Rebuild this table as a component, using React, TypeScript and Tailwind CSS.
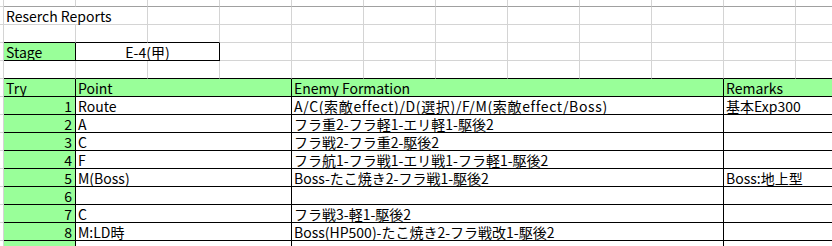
import type { ReactNode } from "react";

type Edge = "grid" | "ink" | "head";

const spanCls: Record<number, string> = {
  1: "col-span-1",
  2: "col-span-2",
  3: "col-span-3",
  6: "col-span-6",
};

const rightCls: Record<Edge, string> = {
  grid: "border-r-[#d4d4d4]",
  ink: "border-r-black",
  head: "border-r-[#d4d4d4]",
};

const bottomCls: Record<Edge, string> = {
  grid: "border-b-[#d4d4d4]",
  ink: "border-b-black",
  head: "border-b-[#a0a0a0]",
};

type CellProps = {
  span?: number;
  green?: boolean;
  r?: Edge;
  b?: Edge;
  align?: "left" | "right" | "center";
  short?: boolean;
  wide?: boolean;
  children?: ReactNode;
};

function Cell({ span = 1, green, r = "grid", b = "grid", align = "left", short, wide, children }: CellProps) {
  const justify =
    align === "right" ? "justify-end pr-[3px]" : align === "center" ? "justify-center" : "justify-start pl-[2px]";
  return (
    <div
      className={`${spanCls[span]} ${short ? "h-[7px]" : "h-[18px]"} border-r border-b ${rightCls[r]} ${bottomCls[b]} ${
        green ? "bg-[#99ff99]" : "bg-white"
      } ${wide ? "tracking-[0.65px]" : ""} flex items-end ${justify} whitespace-nowrap leading-[16px]`}
    >
      {children}
    </div>
  );
}

// left gutter, one per sheet row
const Gutter = ({ short }: { short?: boolean }) => (
  <div className={`${short ? "h-[7px]" : "h-[18px]"} border-r border-b border-r-[#d4d4d4] border-b-[#d4d4d4] bg-white`} />
);

const blanks = (n: number, b: Edge = "grid") =>
  Array.from({ length: n }, (_, i) => <Cell key={`x${i}`} b={b} />);

const tries = [
  { n: "1", point: "Route", enemy: "A/C(索敵effect)/D(選択)/F/M(索敵effect/Boss)", note: "基本Exp300", wide: true },
  { n: "2", point: "A", enemy: "フラ重2-フラ軽1-エリ軽1-駆後2", note: "" },
  { n: "3", point: "C", enemy: "フラ戦2-フラ重2-駆後2", note: "" },
  { n: "4", point: "F", enemy: "フラ航1-フラ戦1-エリ戦1-フラ軽1-駆後2", note: "" },
  { n: "5", point: "M(Boss)", enemy: "Boss-たこ焼き2-フラ戦1-駆後2", note: "Boss:地上型" },
  { n: "6", point: "", enemy: "", note: "" },
  { n: "7", point: "C", enemy: "フラ戦3-軽1-駆後2", note: "" },
  { n: "8", point: "M:LD時", enemy: "Boss(HP500)-たこ焼き2-フラ戦改1-駆後2", note: "" },
  { n: "", point: "", enemy: "", note: "" },
];

export default function App() {
  return (
    <div className="w-[832px] h-[246px] overflow-hidden bg-white text-black text-[14px] font-['Noto_Sans_CJK_JP','Liberation_Sans',sans-serif]">
      <div className="grid grid-cols-[4px_repeat(12,72px)] w-max">
        {/* column header strip */}
        <Gutter short />
        {Array.from({ length: 12 }, (_, i) => (
          <Cell key={`h${i}`} short b="head" />
        ))}

        {/* title */}
        <Gutter />
        <Cell span={2}>Reserch Reports</Cell>
        {blanks(10)}

        {/* spacer above stage box */}
        <Gutter />
        <Cell b="ink" />
        <Cell b="ink" />
        <Cell b="ink" />
        {blanks(9)}

        {/* stage */}
        <Gutter />
        <Cell green r="ink" b="ink">
          Stage
        </Cell>
        <Cell span={2} r="ink" b="ink" align="center">
          E-4(甲)
        </Cell>
        {blanks(9)}

        {/* spacer above table */}
        <Gutter />
        {blanks(12, "ink")}

        {/* table header */}
        <Gutter />
        <Cell green r="ink" b="ink">
          Try
        </Cell>
        <Cell span={3} green r="ink" b="ink">
          Point
        </Cell>
        <Cell span={6} green r="ink" b="ink">
          Enemy Formation
        </Cell>
        <Cell span={2} green r="ink" b="ink">
          Remarks
        </Cell>

        {tries.map((t, i) => [
          <Gutter key={`g${i}`} />,
          <Cell key={`n${i}`} green r="ink" b="ink" align="right">
            {t.n}
          </Cell>,
          <Cell key={`p${i}`} span={3} r="ink" b="ink">
            {t.point}
          </Cell>,
          <Cell key={`e${i}`} span={6} r="ink" b="ink" wide={t.wide}>
            {t.enemy}
          </Cell>,
          <Cell key={`r${i}`} span={2} r="ink" b="ink">
            {t.note}
          </Cell>,
        ])}
      </div>
    </div>
  );
}
